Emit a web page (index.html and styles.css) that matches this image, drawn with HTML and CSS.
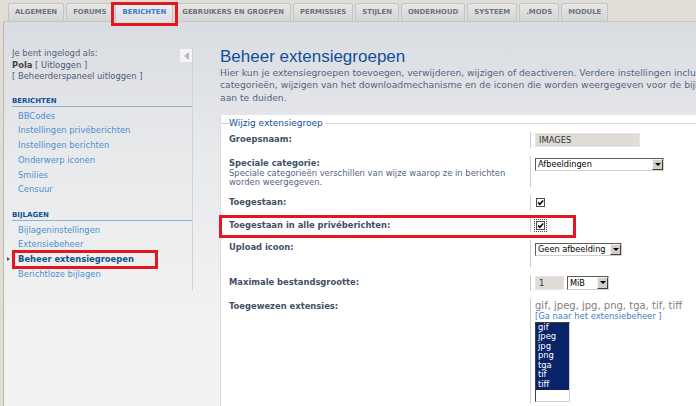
FILE: index.html
```html
<!DOCTYPE html>
<html lang="nl">
<head>
  <meta charset="UTF-8" />
  <meta name="viewport" content="width=device-width, initial-scale=1.0" />
  <title>Beheer extensiegroepen</title>
  <link rel="stylesheet" href="styles.css">
</head>
<body>
  <div class="page">
    <!-- Tabs bovenaan -->
    <ul class="tabs">
      <li class="tab">ALGEMEEN</li>
      <li class="tab">FORUMS</li>
      <li class="tab active">BERICHTEN<span class="mark mark-tab"></span></li>
      <li class="tab">GEBRUIKERS EN GROEPEN</li>
      <li class="tab">PERMISSIES</li>
      <li class="tab">STIJLEN</li>
      <li class="tab">ONDERHOUD</li>
      <li class="tab">SYSTEEM</li>
      <li class="tab">.MODS</li>
      <li class="tab">MODULE</li>
    </ul>

    <div class="panel">
      <div class="sidebar">
        <div class="side-inner">
          <span class="collapse"></span>
          <div class="user">
            Je bent ingelogd als:<br />
            <b>Pola</b> <a href="#">[ Uitloggen ]</a><br />
            <a href="#">[ Beheerderspaneel uitloggen ]</a>
          </div>

          <h3 class="menu-head">Berichten</h3>
          <ul class="menu">
            <li><a href="#">BBCodes</a></li>
            <li><a href="#">Instellingen privéberichten</a></li>
            <li><a href="#">Instellingen berichten</a></li>
            <li><a href="#">Onderwerp iconen</a></li>
            <li><a href="#">Smilies</a></li>
            <li><a href="#">Censuur</a></li>
          </ul>

          <h3 class="menu-head">Bijlagen</h3>
          <ul class="menu">
            <li><a href="#">Bijlageninstellingen</a></li>
            <li><a href="#">Extensiebeheer</a></li>
            <li class="current"><a href="#">Beheer extensiegroepen</a><span class="mark mark-menu"></span></li>
            <li><a href="#">Berichtloze bijlagen</a></li>
          </ul>
        </div>
      </div>

      <div class="main">
        <h1>Beheer extensiegroepen</h1>
        <p class="intro">
          Hier kun je extensiegroepen toevoegen, verwijderen, wijzigen of deactiveren. Verdere instellingen inclusief het toekennen van speciale<br />
          categorieën, wijzigen van het downloadmechanisme en de iconen die worden weergegeven voor de bijlagen van deze groep<br />
          aan te duiden.
        </p>

        <div class="form-box">
          <fieldset>
            <legend>Wijzig extensiegroep</legend>

            <dl class="row">
              <dt><label>Groepsnaam:</label></dt>
              <dd><div class="text-input">IMAGES</div></dd>
            </dl>

            <dl class="row">
              <dt>
                <label>Speciale categorie:</label>
                <span class="explain">Speciale categorieën verschillen van wijze waarop ze in berichten worden weergegeven.</span>
              </dt>
              <dd>
                <div class="select w-cat"><span class="select-value">Afbeeldingen</span><span class="select-btn"></span></div>
              </dd>
            </dl>

            <dl class="row">
              <dt><label>Toegestaan:</label></dt>
              <dd>
                <span class="checkbox"><svg viewBox="0 0 7 7" width="7" height="7"><path d="M1 3.4 L2.8 5.3 L6.2 1.4" fill="none" stroke="#000" stroke-width="1.5"/></svg></span>
              </dd>
            </dl>

            <dl class="row">
              <dt><label>Toegestaan in alle privéberichten:</label></dt>
              <dd>
                <span class="checkbox focus"><svg viewBox="0 0 7 7" width="7" height="7"><path d="M1 3.4 L2.8 5.3 L6.2 1.4" fill="none" stroke="#000" stroke-width="1.5"/></svg></span>
              </dd>
              <span class="mark mark-row"></span>
            </dl>

            <dl class="row">
              <dt><label>Upload icoon:</label></dt>
              <dd>
                <div class="select w-icon"><span class="select-value">Geen afbeelding</span><span class="select-btn"></span></div>
                <div class="icon-preview"></div>
              </dd>
            </dl>

            <dl class="row">
              <dt><label>Maximale bestandsgrootte:</label></dt>
              <dd>
                <div class="size-controls">
                  <div class="text-input small">1</div>
                  <div class="select w-unit"><span class="select-value">MiB</span><span class="select-btn"></span></div>
                </div>
              </dd>
            </dl>

            <dl class="row">
              <dt><label>Toegewezen extensies:</label></dt>
              <dd>
                <div class="ext-list">gif, jpeg, jpg, png, tga, tif, tiff</div>
                <a class="ext-link" href="#">[Ga naar het extensiebeheer ]</a>
                <div class="listbox">
                  <div>gif</div>
                  <div>jpeg</div>
                  <div>jpg</div>
                  <div>png</div>
                  <div>tga</div>
                  <div>tif</div>
                  <div>tiff</div>
                </div>
              </dd>
            </dl>
          </fieldset>
        </div>
      </div>
    </div>
  </div>
</body>
</html>
```

FILE: styles.css
```css
body {
  margin: 0;
  background: #e0ddd6;
  font-family: "DejaVu Sans", Verdana, sans-serif;
  font-size: 8.4px;
  color: #536482;
  overflow: hidden;
}

a {
  text-decoration: none;
}

.page {
  width: 940px;
  padding-top: 3px;
}

/* Tabs */
.tabs {
  display: flex;
  gap: 2px;
  margin: 0;
  padding: 0 0 0 8px;
  list-style: none;
}

.tab {
  position: relative;
  height: 17px;
  padding: 0 6px;
  border: 1px solid #c4c4c4;
  border-bottom: 0;
  border-radius: 3px 3px 0 0;
  background: linear-gradient(#e7e7e7, #d4d4d4);
  color: #6d737c;
  font-size: 6.9px;
  font-weight: bold;
  line-height: 17px;
}

.tab.active {
  height: 18px;
  margin-bottom: -1px;
  z-index: 1;
  background: linear-gradient(#eef0f3, #dcdfe3);
  color: #3b7cc4;
}

/* Rode markeringen */
.mark {
  position: absolute;
  box-sizing: border-box;
  border: 3px solid #e2171f;
  pointer-events: none;
}

.mark-tab {
  left: -5px;
  right: -6px;
  top: -2px;
  bottom: -4px;
}

.mark-menu {
  left: -6px;
  top: -2px;
  width: 146px;
  height: 19px;
}

.mark-row {
  left: -10px;
  top: -3px;
  width: 357px;
  height: 23px;
}

/* Paneel */
.panel {
  display: flex;
  min-height: 390px;
  margin-left: 3px;
  border-top: 1px solid #c6c6c6;
  border-left: 1px solid #bdb9af;
  background: linear-gradient(#d9dce1, #e9eaec 140px, #f2f2f2 300px);
}

.sidebar {
  flex-shrink: 0;
  width: 189px;
  padding-top: 24px;
}

.side-inner {
  position: relative;
  padding: 2px 0 9px 8px;
  border-right: 1px solid #cfd2d6;
}

.collapse {
  position: absolute;
  top: 3px;
  right: 0;
  width: 12px;
  height: 13px;
  background: #f5f5f5;
  display: flex;
  align-items: center;
  justify-content: center;
}

.collapse::after {
  content: "";
  border-right: 5px solid #b9b9b9;
  border-top: 4px solid transparent;
  border-bottom: 4px solid transparent;
}

.user {
  line-height: 11.5px;
  margin-bottom: 13.5px;
}

.user b {
  color: #454545;
}

.user a {
  color: #4a5b7a;
}

.menu-head {
  margin: 0;
  font-size: 7px;
  line-height: 10px;
  color: #115098;
  text-transform: uppercase;
  border-bottom: 1px solid #8fb3cf;
}

.menu {
  margin: 0 0 13px;
  padding: 1.5px 0 0 6px;
  list-style: none;
  line-height: 14.75px;
}

.menu:last-child {
  margin-bottom: 0;
}

.menu a {
  color: #4a90d2;
}

.menu li.current {
  position: relative;
}

.menu li.current a {
  color: #105289;
  font-weight: bold;
}

.menu li.current::before {
  content: "";
  position: absolute;
  left: -11px;
  top: 5px;
  border-left: 3px solid #555;
  border-top: 2.5px solid transparent;
  border-bottom: 2.5px solid transparent;
}

/* Hoofdgedeelte */
.main {
  flex: 1;
  padding: 24.5px 0 0 27px;
}

h1 {
  margin: 0;
  font: normal 17px/20px "Liberation Sans", Arial, sans-serif;
  color: #115098;
}

.intro {
  margin: 0 0 10.5px;
  font-size: 9.2px;
  line-height: 12.5px;
  white-space: nowrap;
}

.form-box {
  min-height: 300px;
  padding-top: 3px;
  background: #fff;
  border-left: 1px solid #dcdcdc;
}

fieldset {
  margin: 0;
  padding: 3px 0 0 8px;
  border: 0;
  border-top: 1px solid #d7d7d7;
}

legend {
  padding: 0 2px 0 0;
  font-size: 9px;
  line-height: 11px;
  color: #115098;
}

.row {
  position: relative;
  display: flex;
  margin: 0 0 8px;
}

.row dt {
  flex-shrink: 0;
  box-sizing: border-box;
  width: 301px;
  padding-top: 2px;
}

.row dt label {
  display: block;
  line-height: 11px;
  font-weight: bold;
  color: #425067;
}

.row dt .explain {
  display: block;
  line-height: 9px;
}

.row dd {
  flex: 1;
  margin: 0;
  padding: 1px 0 1px 4px;
  border-left: 1px solid #cccccc;
}

/* Formulierelementen */
.text-input {
  box-sizing: border-box;
  width: 105px;
  height: 14px;
  padding-left: 3px;
  border: 1px solid #e7e4de;
  background: #dfdcd5;
  color: #333;
  line-height: 12px;
}

.text-input.small {
  width: 29px;
}

.size-controls {
  display: flex;
  gap: 3px;
}

.select {
  display: flex;
  box-sizing: border-box;
  height: 13px;
  margin-top: 1px;
  border: 1px solid;
  border-color: #5b5b5b #d4d0c8 #d4d0c8 #5b5b5b;
  background: #fff;
  color: #000;
  font-size: 8.2px;
  line-height: 11px;
}

.size-controls .select {
  height: 14px;
  margin-top: 0;
  line-height: 12px;
}

.select-value {
  flex: 1;
  padding-left: 2px;
  overflow: hidden;
  white-space: nowrap;
}

.select-btn {
  display: flex;
  align-items: center;
  justify-content: center;
  box-sizing: border-box;
  width: 11px;
  border: 1px solid;
  border-color: #f4f4f4 #404040 #404040 #f4f4f4;
  background: #d4d0c8;
}

.select-btn::after {
  content: "";
  border-top: 3px solid #000;
  border-left: 3px solid transparent;
  border-right: 3px solid transparent;
}

.w-cat {
  width: 129px;
}

.w-icon {
  width: 87px;
  margin-top: 2px;
}

.w-unit {
  width: 42px;
}

.icon-preview {
  height: 10px;
}

.checkbox {
  display: flex;
  align-items: center;
  justify-content: center;
  box-sizing: border-box;
  width: 9px;
  height: 9px;
  margin: 2px 0 2px 1px;
  border: 1px solid #4d4d4d;
  background: #fff;
}

.checkbox.focus {
  margin-bottom: 1px;
  outline: 1px dotted #444;
  outline-offset: 1px;
}

.ext-list {
  font-size: 10px;
  line-height: 11px;
  color: #808080;
}

.ext-link {
  display: block;
  line-height: 11px;
  color: #3d7ec4;
}

.listbox {
  box-sizing: border-box;
  width: 35px;
  height: 80px;
  border: 1px solid;
  border-color: #404040 #d4d0c8 #d4d0c8 #404040;
  background: #fff;
}

.listbox div {
  padding-left: 2px;
  background: #0a246a;
  color: #fff;
  line-height: 9.6px;
}
```
